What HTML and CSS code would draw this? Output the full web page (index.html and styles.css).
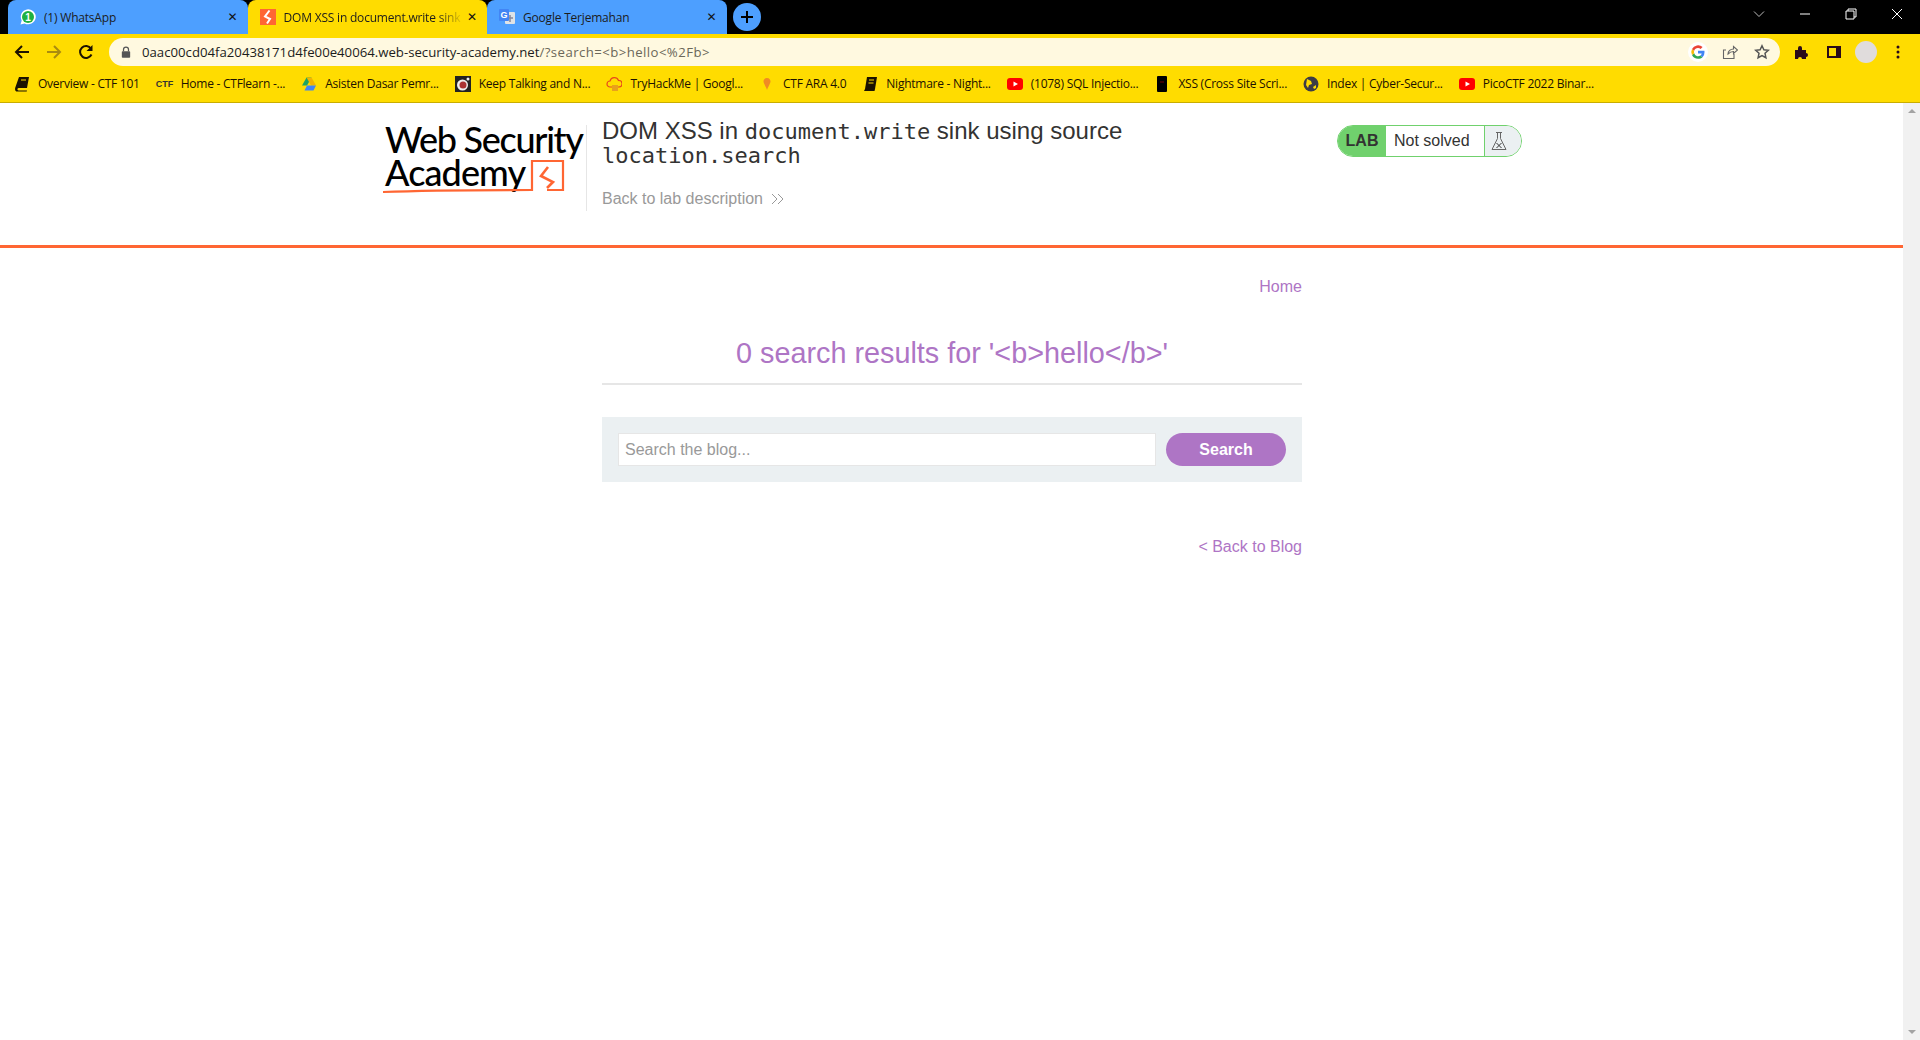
FILE: index.html
```html
<!DOCTYPE html>
<html lang="en">
<head>
    <meta charset="UTF-8">
    <title>DOM XSS in document.write sink using source location.search</title>
    <link rel="stylesheet" href="styles.css">
</head>
<body>
    <!-- browser chrome -->
    <div class="tabstrip">
        <div class="tab">
            <svg class="fav" viewBox="0 0 16 16"><path d="M.5 15.500l1.200-4A7.500 7.500 0 1 1 4.600 14.400z" fill="#fff"/><circle cx="8" cy="8" r="6" fill="#1fb141"/><text class="fav-num" x="8" y="11.500">1</text></svg>
            <span class="tab-title">(1) WhatsApp</span>
            <span class="tab-close">✕</span>
        </div>
        <div class="tab active">
            <svg class="fav" viewBox="0 0 16 16"><rect width="16" height="16" fill="#ff6633"/><path d="M9.500 1.500L5 7.500l5 2.500-3 4.500" fill="none" stroke="#fff" stroke-width="2"/></svg>
            <span class="tab-title fade">DOM XSS in document.write sink</span>
            <span class="tab-close">✕</span>
        </div>
        <div class="tab">
            <svg class="fav" viewBox="0 0 16 16"><rect x="6" y="3" width="10" height="12" rx="1" fill="#dfe3e6"/><path d="M11 6v7M9 9h5" stroke="#889" stroke-width="1.500"/><rect width="10" height="12" rx="1" fill="#4285f4"/><text class="fav-g" x="5" y="9">G</text></svg>
            <span class="tab-title">Google Terjemahan</span>
            <span class="tab-close">✕</span>
        </div>
        <div class="new-tab">
            <svg viewBox="0 0 16 16"><path d="M8 2v12M2 8h12" stroke="#000" stroke-width="2"/></svg>
        </div>
        <div class="win-controls">
            <svg viewBox="0 0 12 12"><path d="M1 3.500l5 5 5-5" fill="none" stroke="#bbb"/></svg>
            <svg viewBox="0 0 12 12"><path d="M1 6h10" stroke="#fff"/></svg>
            <svg viewBox="0 0 12 12"><path d="M3 3V1h8v8H9M1 3h8v8H1z" fill="none" stroke="#fff"/></svg>
            <svg viewBox="0 0 12 12"><path d="M1 1l10 10M11 1L1 11" stroke="#fff"/></svg>
        </div>
    </div>

    <div class="toolbar">
        <svg class="tool" viewBox="0 0 16 16"><path d="M15 8H2M8 2L2 8l6 6" fill="none" stroke="#1c1200" stroke-width="2"/></svg>
        <svg class="tool" viewBox="0 0 16 16"><path d="M1 8h13M8 2l6 6-6 6" fill="none" stroke="#a98b10" stroke-width="2"/></svg>
        <svg class="tool" viewBox="0 0 16 16"><path d="M13.500 10.500A6 6 0 1 1 13 4.500" fill="none" stroke="#1c1200" stroke-width="2"/><path d="M14.500 1v6h-6z" fill="#1c1200"/></svg>
        <div class="omnibox">
            <svg class="lock" viewBox="0 0 12 14"><path d="M3 6V4a3 3 0 0 1 6 0v2" fill="none" stroke="#555" stroke-width="1.500"/><rect x="1" y="6" width="10" height="8" rx="1" fill="#555"/></svg>
            <span class="url"><span class="url-host">0aac00cd04fa20438171d4fe00e40064.web-security-academy.net</span>/?search=&lt;b&gt;hello&lt;%2Fb&gt;</span>
            <span class="g-badge">
                <svg viewBox="0 0 16 16"><path d="M14.500 8.200c0-.5 0-1-.1-1.400H8v2.700h3.700a3.200 3.200 0 0 1-1.400 2l2.200 1.700a6.600 6.600 0 0 0 2-5z" fill="#4285f4"/><path d="M8 14.800c1.800 0 3.400-.6 4.500-1.600l-2.200-1.700a4 4 0 0 1-6.100-2.200L2 11a6.800 6.800 0 0 0 6 3.800z" fill="#34a853"/><path d="M4.200 9.300a4 4 0 0 1 0-2.600L2 5a6.800 6.800 0 0 0 0 6z" fill="#fbbc05"/><path d="M8 3.900c1 0 1.900.4 2.600 1l2-1.900A6.800 6.800 0 0 0 2 5l2.200 1.700A4 4 0 0 1 8 3.900z" fill="#ea4335"/></svg>
            </span>
            <svg class="omni-icon" viewBox="0 0 16 16"><path d="M12 10v4.500H1.500V6H4M6 10c0-3 2.500-5 5.500-5V2.500L15.500 6l-4 3.500V7.500C9 7.500 7.500 8.500 6 10z" fill="none" stroke="#666" stroke-width="1.100"/></svg>
            <svg class="omni-icon" viewBox="0 0 16 16"><path d="M8 1.800l1.900 4 4.400.5-3.300 3 .9 4.400L8 11.500l-3.900 2.200.9-4.400-3.300-3 4.400-.5z" fill="none" stroke="#555" stroke-width="1.500"/></svg>
        </div>
        <div class="tool-right">
            <svg class="tool" viewBox="0 0 16 16"><path d="M1 6h3V4a2 2 0 0 1 4 0v2h4v3a2 2 0 0 1 0 4v2H8a2 2 0 0 0-4 0H1z" fill="#2a0a1a"/></svg>
            <svg class="tool" viewBox="0 0 16 16"><path d="M1 2h14v12H1z" fill="#2a0a1a"/><rect x="3" y="4" width="7" height="8" fill="#ffdc00"/></svg>
            <div class="avatar"></div>
            <svg class="tool" viewBox="0 0 16 16"><circle cx="8" cy="3" r="1.500" fill="#2a0a1a"/><circle cx="8" cy="8" r="1.500" fill="#2a0a1a"/><circle cx="8" cy="13" r="1.500" fill="#2a0a1a"/></svg>
        </div>
    </div>

    <div class="bookmarks">
        <div class="bm"><svg viewBox="0 0 16 16"><path d="M5 1h10l-2 11H4.500c-1.500 0-1.500 2.500 0 2.500H13l-.3 1H3c-2 0-2.200-2.500-1.700-4z" fill="#1a1200"/><path d="M7 4h5" stroke="#ffdc00"/></svg>Overview - CTF 101</div>
        <div class="bm"><span class="bm-ctf">CTF</span>Home - CTFlearn -...</div>
        <div class="bm"><svg viewBox="0 0 16 16"><path d="M5.500 1.500h5L6 9.500H1z" fill="#1fa463"/><path d="M10.500 1.500L15 9.500h-5L5.500 1.500z" fill="#f4b400"/><path d="M3.500 14.500h9L15 9.500H6z" fill="#4285f4"/></svg>Asisten Dasar Pemr...</div>
        <div class="bm"><svg viewBox="0 0 16 16"><rect width="16" height="16" fill="#222"/><circle cx="7.500" cy="9" r="5.500" fill="#eee"/><circle cx="8" cy="9" r="3.500" fill="#a33"/><circle cx="13" cy="3" r="1.500" fill="#eee"/></svg>Keep Talking and N...</div>
        <div class="bm"><svg viewBox="0 0 16 16"><path d="M4 11a3 3 0 0 1 0-6 4.500 4.500 0 0 1 8.500-.5A3 3 0 0 1 13 11H4z" fill="none" stroke="#e8481c" stroke-width="1.200"/><rect x="6" y="9" width="6" height="6" fill="#e8a11c"/></svg>TryHackMe | Googl...</div>
        <div class="bm"><svg viewBox="0 0 16 16"><path d="M8 2c2.500 0 3.500 2 3.500 3.500S9 11 8 14C7 11 4.500 7 4.500 5.500S5.500 2 8 2z" fill="#f08a24"/></svg>CTF ARA 4.0</div>
        <div class="bm"><svg viewBox="0 0 16 16"><path d="M5 1h10l-2 12H3z" fill="#1a1200"/><path d="M3 13h10l-.5 2H2z" fill="#1a1200"/><path d="M7 4h5M6.500 7h5" stroke="#ffdc00"/></svg>Nightmare - Night...</div>
        <div class="bm"><svg viewBox="0 0 16 16"><rect y="2" width="16" height="12" rx="3" fill="#f00"/><path d="M6.500 5.500v5L11 8z" fill="#fff"/></svg>(1078) SQL Injectio...</div>
        <div class="bm"><svg viewBox="0 0 16 16"><rect x="3" width="10" height="16" rx="1" fill="#000"/><path d="M6 6h4" stroke="#700"/></svg>XSS (Cross Site Scri...</div>
        <div class="bm"><svg viewBox="0 0 16 16"><circle cx="8" cy="8" r="7.500" fill="#3c3c46"/><path d="M4 3l4 2 1 3-3 1-1 3-2-3zM10 11l3-2v3l-2 1z" fill="#ffdc00"/></svg>Index | Cyber-Secur...</div>
        <div class="bm"><svg viewBox="0 0 16 16"><rect y="2" width="16" height="12" rx="3" fill="#f00"/><path d="M6.500 5.500v5L11 8z" fill="#fff"/></svg>PicoCTF 2022 Binar...</div>
    </div>

    <!-- page viewport -->
    <div class="viewport">
        <div class="page">
            <header class="lab-header">
                <div class="lab-header-inner">
                    <div class="logo">
                        <div class="logo-line">Web Security</div>
                        <div class="logo-line academy">Academy</div>
                        <svg class="logo-mark" viewBox="0 0 190 40"><path d="M0 34C50 32 100 32 149 32V3H180V32H164" fill="none" stroke="#ff6633" stroke-width="2.200"/><path d="M165 9L158 18L170 24L164 30" fill="none" stroke="#ff6633" stroke-width="2.600"/></svg>
                    </div>
                    <div class="lab-title">
                        <h2>DOM XSS in <code>document.write</code> sink using source <code>location.search</code></h2>
                        <a class="back-link" href="#">Back to lab description
                            <svg viewBox="0 0 14 12"><path d="M1 1l5 5-5 5M7 1l5 5-5 5" fill="none" stroke="#999"/></svg>
                        </a>
                    </div>
                    <div class="lab-status">
                        <span class="lab-tag">LAB</span>
                        <span class="lab-state">Not solved</span>
                        <span class="lab-flask">
                            <svg viewBox="0 0 16 20"><path d="M5 1.500h6M6.500 1.500v6L1 18.500h14L9.500 7.500v-6" fill="none" stroke="#666"/><path d="M5.500 12l5 5M10.500 12l-5 5" stroke="#333"/></svg>
                        </span>
                    </div>
                </div>
            </header>

            <main class="container">
                <nav class="top-links"><a href="#">Home</a></nav>
                <h1>0 search results for '&lt;b&gt;hello&lt;/b&gt;'</h1>
                <hr>
                <form class="search-box">
                    <input type="text" placeholder="Search the blog...">
                    <button type="button">Search</button>
                </form>
                <div class="back-blog"><a href="#">&lt; Back to Blog</a></div>
            </main>
        </div>
        <div class="scrollbar">
            <span class="arrow up"></span>
            <span class="arrow down"></span>
        </div>
    </div>
</body>
</html>
```

FILE: styles.css
```css
:root {
    --yellow: #ffdc00;
    --tab-blue: #4d9fff;
    --orange: #ff6633;
    --purple: #ae75c5;
    --panel: #ebf0f2;
    --green: #70d16d;
}

* {
    margin: 0;
    padding: 0;
    box-sizing: border-box;
}

body {
    height: 1040px;
    overflow: hidden;
    display: flex;
    flex-direction: column;
    background: #fff;
    font-family: "Liberation Sans", Arial, sans-serif;
}

/* Tab strip */
.tabstrip {
    height: 34px;
    flex: none;
    display: flex;
    background: #000;
    padding-left: 8px;
}

.tab {
    width: 239.500px;
    display: flex;
    align-items: center;
    padding: 0 7px 0 12px;
    background: var(--tab-blue);
    border-radius: 8px 8px 0 0;
    font-family: "Open Sans", sans-serif;
    font-size: 12px;
    color: #1c1c1c;
}

.tab.active {
    background: var(--yellow);
}

.fav {
    width: 16px;
    height: 16px;
    flex: none;
    margin-right: 8px;
}

.fav-num {
    font-family: "Liberation Sans", sans-serif;
    font-size: 10px;
    font-weight: 700;
    fill: #fff;
    text-anchor: middle;
}

.fav-g {
    font-family: "Liberation Sans", sans-serif;
    font-size: 9px;
    font-weight: 700;
    fill: #fff;
    text-anchor: middle;
}

.tab-title {
    flex: 1;
    white-space: nowrap;
    overflow: hidden;
    letter-spacing: -0.2px;
}

.tab-title.fade {
    -webkit-mask-image: linear-gradient(to right, #000 85%, transparent);
    mask-image: linear-gradient(to right, #000 85%, transparent);
}

.tab-close {
    width: 16px;
    font-size: 12px;
    font-weight: 700;
    font-family: "DejaVu Sans", sans-serif;
    text-align: center;
    color: #111;
}

.new-tab {
    width: 28px;
    height: 28px;
    margin: 3px 0 0 6px;
    border-radius: 50%;
    background: var(--tab-blue);
    display: flex;
    align-items: center;
    justify-content: center;
}

.new-tab svg {
    width: 16px;
    height: 16px;
}

.win-controls {
    margin-left: auto;
    display: flex;
    gap: 34px;
    padding: 8px 17px 0 0;
}

.win-controls svg {
    width: 12px;
    height: 12px;
}

/* Toolbar */
.toolbar {
    height: 36px;
    flex: none;
    display: flex;
    align-items: center;
    background: var(--yellow);
    padding: 0 14px 0 14px;
    gap: 16px;
}

.tool {
    width: 16px;
    height: 16px;
    flex: none;
}

.omnibox {
    height: 28px;
    width: 1671px;
    margin-left: -1px;
    flex: none;
    display: flex;
    align-items: center;
    background: #fff9e0;
    border-radius: 14px;
    padding: 0 10px 0 12px;
}

.lock {
    width: 10px;
    height: 12px;
    margin-right: 11px;
}

.url {
    flex: 1;
    color: #6b6759;
    font-family: "Open Sans", sans-serif;
    font-size: 13.200px;
    letter-spacing: 0.43px;
    white-space: nowrap;
}

.url-host {
    color: #1c1c1c;
    letter-spacing: 0;
}

.g-badge {
    width: 20px;
    height: 20px;
    margin: 0 -2px 0 14px;
    border-radius: 50%;
    background: #fff;
    display: flex;
    align-items: center;
    justify-content: center;
}

.g-badge svg {
    width: 16px;
    height: 16px;
}

.omni-icon {
    width: 16px;
    height: 16px;
    margin-left: 16px;
}

.tool-right {
    display: flex;
    align-items: center;
    gap: 16px;
    margin-left: -2px;
}

.avatar {
    width: 22px;
    height: 22px;
    margin: 0 -3px 0 -3px;
    border-radius: 50%;
    background: #e0dcdc;
}

/* Bookmarks */
.bookmarks {
    height: 33px;
    flex: none;
    display: flex;
    align-items: center;
    padding: 0 0 5px 14px;
    gap: 16px;
    background: var(--yellow);
    border-bottom: 1px solid #c9ad00;
    font-family: "Open Sans", sans-serif;
    font-size: 12px;
    color: #1c1200;
    white-space: nowrap;
    letter-spacing: -0.25px;
}

.bm {
    display: flex;
    align-items: center;
}

.bm svg {
    width: 16px;
    height: 16px;
    margin-right: 8px;
}

.bm-ctf {
    width: 16px;
    margin-right: 9px;
    font-family: "Liberation Sans", sans-serif;
    font-size: 9px;
    font-weight: 700;
    letter-spacing: 0;
    color: #333;
}

/* Page */
.viewport {
    flex: 1;
    display: flex;
    min-height: 0;
}

.page {
    flex: 1;
    min-width: 0;
}

.scrollbar {
    width: 17px;
    background: #f1f1f1;
    display: flex;
    flex-direction: column;
    justify-content: space-between;
    align-items: center;
    padding: 6px 0;
}

.arrow {
    width: 0;
    height: 0;
    border-left: 4px solid transparent;
    border-right: 4px solid transparent;
}

.arrow.up {
    border-bottom: 4px solid #a3a3a3;
}

.arrow.down {
    border-top: 4px solid #a3a3a3;
}

/* Lab header */
.lab-header {
    height: 145px;
    border-bottom: 3px solid var(--orange);
}

.lab-header-inner {
    display: flex;
    align-items: flex-start;
    padding: 16px 0 0 385px;
}

.logo {
    position: relative;
    width: 202px;
    height: 86px;
    margin-top: 6px;
    border-right: 1px solid #e6e6e6;
    font-family: "Lato", sans-serif;
    font-size: 36px;
    font-weight: 500;
    line-height: 33px;
    letter-spacing: -1.3px;
    color: #000;
    white-space: nowrap;
}

.logo-line:first-child {
    margin-top: -2px;
}

.academy {
    letter-spacing: -0.9px;
}

.logo-mark {
    position: absolute;
    left: -2px;
    top: 33px;
    width: 190px;
    height: 40px;
}

.lab-title {
    width: 553px;
    margin-left: 15px;
    color: #333332;
}

.lab-title h2 {
    font-size: 24px;
    font-weight: 400;
    line-height: 24px;
}

.lab-title code {
    font-family: "DejaVu Sans Mono", monospace;
    font-size: 22px;
    line-height: 1;
}

.back-link {
    display: flex;
    align-items: center;
    gap: 8px;
    margin-top: 23px;
    font-size: 16px;
    color: #999;
    text-decoration: none;
}

.back-link svg {
    width: 14px;
    height: 12px;
}

.lab-status {
    display: flex;
    height: 32px;
    margin: 6px 0 0 182px;
    border: 1px solid var(--green);
    border-radius: 16px;
    overflow: hidden;
    font-size: 16px;
    line-height: 30px;
}

.lab-tag {
    width: 48px;
    background: var(--green);
    text-align: center;
    font-weight: 700;
    color: #333332;
}

.lab-state {
    width: 99px;
    padding-left: 8px;
    border-right: 1px solid var(--green);
    color: #333332;
}

.lab-flask {
    width: 36px;
    background: var(--panel);
    display: flex;
    align-items: center;
    justify-content: center;
    padding-right: 8px;
}

.lab-flask svg {
    width: 16px;
    height: 20px;
}

/* Blog content */
.container {
    width: 700px;
    margin-left: 602px;
}

.container a {
    color: var(--purple);
    text-decoration: none;
}

.top-links {
    padding-top: 30px;
    text-align: right;
    font-size: 16px;
    line-height: 18px;
}

h1 {
    margin-top: 40px;
    font-size: 28.800px;
    font-weight: 400;
    line-height: 34px;
    text-align: center;
    color: var(--purple);
}

hr {
    height: 2px;
    margin-top: 13px;
    border: 0;
    background: #e6e6e6;
}

.search-box {
    height: 65px;
    margin-top: 32px;
    display: flex;
    align-items: center;
    justify-content: space-between;
    padding: 0 16px;
    background: var(--panel);
}

.search-box input {
    width: 538px;
    height: 33px;
    padding: 0 6px;
    border: 1px solid #e6e6e6;
    font-family: inherit;
    font-size: 16px;
    background: #fff;
}

.search-box input::placeholder {
    color: #999;
}

.search-box button {
    width: 120px;
    height: 33px;
    border: 0;
    border-radius: 25px;
    background: var(--purple);
    color: #fff;
    font-family: inherit;
    font-size: 16px;
    font-weight: 700;
}

.back-blog {
    margin-top: 56px;
    text-align: right;
    font-size: 16px;
    line-height: 18px;
}
```
